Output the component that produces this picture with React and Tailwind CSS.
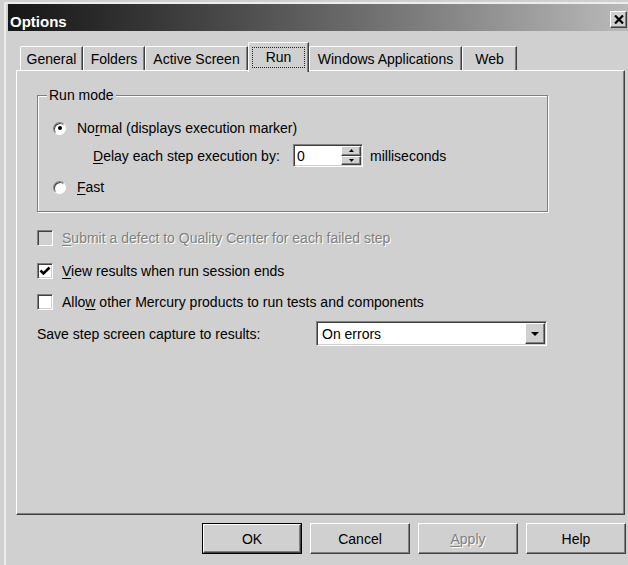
import React from "react";

// Win2000-style bevels
const raised =
  "border border-t-white border-l-white border-r-[#404040] border-b-[#404040] shadow-[inset_-1px_-1px_0_#808080]";
const sunken =
  "border border-t-[#808080] border-l-[#808080] border-r-white border-b-white shadow-[inset_1px_1px_0_#404040,inset_-1px_-1px_0_#d0d0d0]";

function Key({ children }) {
  return <span className="underline underline-offset-[2px] decoration-1">{children}</span>;
}

function CloseButton() {
  return (
    <div className={`mt-[7px] w-[17px] h-[17px] bg-[#d0d0d0] flex items-center justify-center ${raised}`}>
      <svg width="10" height="9" viewBox="0 0 10 9">
        <path d="M1 0.5 L9 8.5 M9 0.5 L1 8.5" stroke="#000" strokeWidth="2.2" />
      </svg>
    </div>
  );
}

function Tab({ label, width, selected }) {
  if (selected) {
    return (
      <div
        className={`relative z-10 h-[30px] -mb-[2px] bg-[#d0d0d0] border-t border-l border-r border-t-white border-l-white border-r-[#404040] shadow-[inset_-1px_0_0_#808080] rounded-tl-[2px] pt-[4px] pb-[4px] pl-[3px] pr-[3px] ${width}`}
      >
        <div className="h-full border border-dotted border-[#222] flex items-center justify-center pb-[2px]">
          {label}
        </div>
      </div>
    );
  }
  return (
    <div
      className={`h-[24px] flex items-center justify-center border-t border-l border-r border-t-white border-l-white border-r-[#404040] shadow-[inset_-1px_0_0_#808080] rounded-tl-[2px] ${width}`}
    >
      {label}
    </div>
  );
}

function Radio({ checked }) {
  return (
    <div className="w-[13px] h-[13px] shrink-0 rounded-full bg-white border border-t-[#808080] border-l-[#808080] border-r-white border-b-white shadow-[inset_1px_1px_0_#404040] flex items-center justify-center">
      {checked && <div className="w-[4px] h-[4px] rounded-full bg-black" />}
    </div>
  );
}

function Checkbox({ checked, disabled }) {
  return (
    <div
      className={`w-[16px] h-[16px] shrink-0 ${disabled ? "bg-[#d0d0d0]" : "bg-white"} ${sunken}`}
    >
      {checked && (
        <svg width="14" height="14" viewBox="0 0 14 14">
          <path d="M2.5 6.5 L5.5 9.5 L11.5 3.5" stroke="#000" strokeWidth="2.6" fill="none" />
        </svg>
      )}
    </div>
  );
}

function Arrow({ up, size = 7 }) {
  const h = Math.ceil(size / 2);
  return (
    <svg width={size} height={h} viewBox={`0 0 ${size} ${h}`}>
      <path
        d={up ? `M0 ${h} L${size / 2} 0 L${size} ${h} Z` : `M0 0 L${size} 0 L${size / 2} ${h} Z`}
        fill="#000"
      />
    </svg>
  );
}

function PushButton({ children, isDefault, disabled }) {
  const inner = (
    <div
      className={`w-full h-full bg-[#d0d0d0] flex items-center justify-center ${raised} ${
        disabled ? "text-[#808080] [text-shadow:1px_1px_0_#fff]" : ""
      }`}
    >
      {children}
    </div>
  );
  if (isDefault) {
    return <div className="w-[100px] h-[31px] border border-black">{inner}</div>;
  }
  return <div className="w-[100px] h-[31px]">{inner}</div>;
}

export default function App() {
  return (
    <div className="w-[628px] h-[565px] overflow-hidden bg-[#d0d0d0] pl-[4px] pt-[2px] text-[14px] leading-[18px] text-black font-['Liberation_Sans',Arial,sans-serif]">
      <div className="h-full border-l-2 border-t-2 border-[#ececec] pl-[2px]">
        {/* title bar */}
        <div className="h-[27px] flex items-start justify-between bg-gradient-to-r from-[#161616] to-[#bababa] pl-[2px] pr-[1px]">
          <span className="mt-[9px] text-white font-bold text-[15px] leading-[17px]">Options</span>
          <CloseButton />
        </div>

        <div className="pl-[8px] pt-[11px]">
          {/* tab strip */}
          <div className="h-[28px] flex items-end pl-[4px]">
            <Tab label="General" width="w-[63px]" />
            <Tab label="Folders" width="w-[62px]" />
            <Tab label="Active Screen" width="w-[103px]" />
            <Tab label="Run" width="w-[61px]" selected />
            <Tab label="Windows Applications" width="w-[153px]" />
            <Tab label="Web" width="w-[55px]" />
          </div>

          {/* tab page */}
          <div className="w-[609px] h-[445px] border border-t-white border-l-white border-r-[#404040] border-b-[#404040] shadow-[inset_-1px_-1px_0_#808080] pl-[20px]">
            {/* Run mode group */}
            <div className="relative mt-[24px] w-[511px] h-[117px] border border-[#808080] shadow-[1px_1px_0_#fff,inset_1px_1px_0_#fff] pt-[23px]">
              <span className="absolute left-[9px] -top-[10px] px-[2px] bg-[#d0d0d0]">Run mode</span>

              <div className="h-[18px] flex items-center pl-[15px] gap-[11px]">
                <Radio checked />
                <span>
                  No<Key>r</Key>mal (displays execution marker)
                </span>
              </div>

              <div className="mt-[7px] h-[23px] flex items-center pl-[55px]">
                <span className="w-[200px]">
                  <Key>D</Key>elay each step execution by:
                </span>
                <div className={`w-[70px] h-[23px] bg-white flex ${sunken} p-[1px]`}>
                  <span className="flex-1 pl-[2px] flex items-center">0</span>
                  <div className="w-[20px] flex flex-col">
                    <div className={`flex-1 bg-[#d0d0d0] flex items-center justify-center ${raised}`}>
                      <Arrow up size={5} />
                    </div>
                    <div className={`flex-1 bg-[#d0d0d0] flex items-center justify-center ${raised}`}>
                      <Arrow size={5} />
                    </div>
                  </div>
                </div>
                <span className="ml-[7px]">milliseconds</span>
              </div>

              <div className="mt-[11px] h-[18px] flex items-center pl-[15px] gap-[11px]">
                <Radio />
                <span>
                  <Key>F</Key>ast
                </span>
              </div>
            </div>

            {/* options */}
            <div className="mt-[18px] h-[16px] flex items-center gap-[9px]">
              <Checkbox disabled />
              <span className="text-[#808080] [text-shadow:1px_1px_0_#fff]">
                <Key>S</Key>ubmit a defect to Quality Center for each failed step
              </span>
            </div>
            <div className="mt-[17px] h-[16px] flex items-center gap-[9px]">
              <Checkbox checked />
              <span>
                <Key>V</Key>iew results when run session ends
              </span>
            </div>
            <div className="mt-[15px] h-[16px] flex items-center gap-[9px]">
              <Checkbox />
              <span>
                Allo<Key>w</Key> other Mercury products to run tests and components
              </span>
            </div>

            <div className="mt-[11px] h-[25px] flex items-center">
              <span className="w-[279px]">Save step screen capture to results:</span>
              <div className={`w-[231px] h-[25px] bg-white flex ${sunken} p-[1px]`}>
                <span className="flex-1 pl-[4px] flex items-center">On errors</span>
                <div className={`w-[20px] bg-[#d0d0d0] flex items-center justify-center ${raised}`}>
                  <Arrow size={8} />
                </div>
              </div>
            </div>
          </div>

          {/* dialog buttons */}
          <div className="mt-[8px] flex justify-end gap-[8px] pr-[2px]">
            <PushButton isDefault>OK</PushButton>
            <PushButton>Cancel</PushButton>
            <PushButton disabled>
              <span>
                <Key>A</Key>pply
              </span>
            </PushButton>
            <PushButton>Help</PushButton>
          </div>
        </div>
      </div>
    </div>
  );
}
